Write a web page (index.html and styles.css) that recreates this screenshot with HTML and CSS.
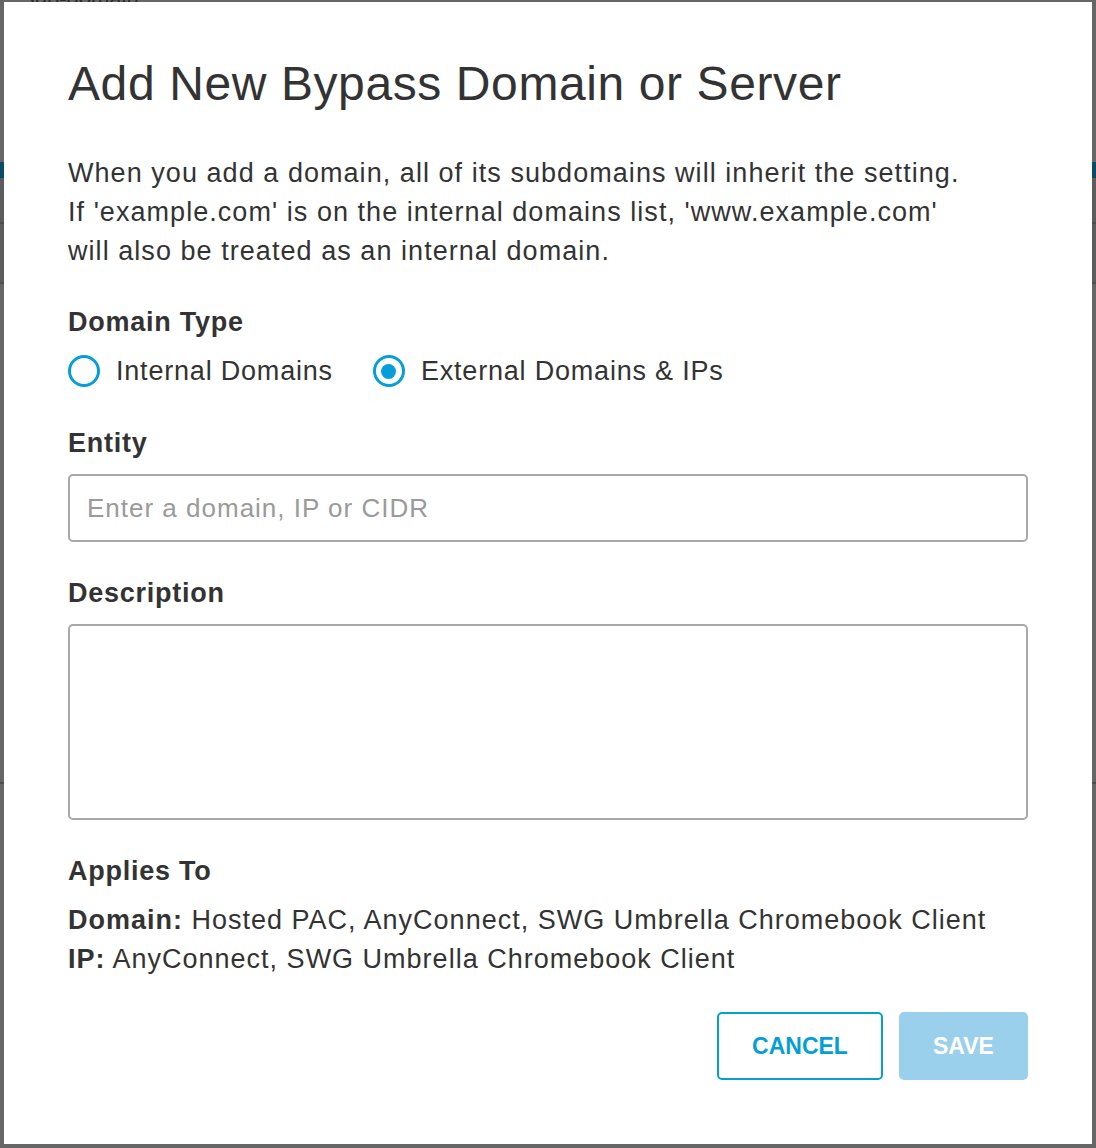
FILE: index.html
```html
<!DOCTYPE html>
<html>
<head>
<meta charset="utf-8">
<link rel="stylesheet" href="styles.css">
</head>
<body>
<div class="backdrop">
  <div class="bg-text">Sub-domain</div>
  <div class="bg-stripe"></div>
  <div class="bg-band"></div>
  <div class="bg-line l1"></div>
  <div class="bg-line l2"></div>
  <div class="bg-line l3"></div>
</div>
<div class="modal">
  <h1 class="title">Add New Bypass Domain or Server</h1>
  <p class="intro">When you add a domain, all of its subdomains will inherit the setting.<br>If 'example.com' is on the internal domains list, 'www.example.com'<br>will also be treated as an internal domain.</p>

  <div class="label label-type">Domain Type</div>
  <div class="radios">
    <label class="radio"><span class="circle"></span><span class="radio-text">Internal Domains</span></label>
    <label class="radio"><span class="circle checked"></span><span class="radio-text">External Domains &amp; IPs</span></label>
  </div>

  <div class="label label-entity">Entity</div>
  <div class="input"><span class="placeholder">Enter a domain, IP or CIDR</span></div>

  <div class="label label-desc">Description</div>
  <div class="textarea"></div>

  <div class="label label-applies">Applies To</div>
  <div class="applies">
    <div><b>Domain:</b> Hosted PAC, AnyConnect, SWG Umbrella Chromebook Client</div>
    <div><b>IP:</b> AnyConnect, SWG Umbrella Chromebook Client</div>
  </div>

  <div class="actions">
    <div class="btn btn-cancel">CANCEL</div>
    <div class="btn btn-save">SAVE</div>
  </div>
</div>
</body>
</html>
```

FILE: styles.css
```css
html, body {
  margin: 0;
  padding: 0;
}
body {
  background: #666666;
  width: 1096px;
  height: 1148px;
  overflow: hidden;
  position: relative;
  font-family: "Liberation Sans", Arial, sans-serif;
  color: #333333;
  padding: 2px 4px 4px 4px;
  box-sizing: border-box;
}
.backdrop {
  position: absolute;
  inset: 0;
  z-index: 0;
}
.bg-text {
  position: absolute;
  left: 20px;
  top: -14px;
  font-size: 22px;
  color: #2a2a2a;
}
.bg-stripe {
  position: absolute;
  left: 0;
  right: 0;
  top: 162px;
  height: 16px;
  background: #0b4a68;
}
.bg-band {
  position: absolute;
  left: 0;
  right: 0;
  top: 178px;
  height: 104px;
  background: #5c5c5c;
}
.bg-line {
  position: absolute;
  left: 0;
  right: 0;
  height: 2px;
  background: #4e4e4e;
}
.l1 { top: 222px; }
.l2 { top: 282px; }
.l3 { top: 782px; }

.modal {
  position: relative;
  z-index: 1;
  background: #ffffff;
  width: 1088px;
  height: 1142px;
  box-sizing: border-box;
  padding: 53px 64px 64px 64px;
  display: flex;
  flex-direction: column;
}
.title {
  margin: 0;
  font-size: 48px;
  line-height: 58px;
  font-weight: normal;
  letter-spacing: 0.6px;
  color: #333333;
}
.intro {
  margin: 41px 0 0 0;
  font-size: 27px;
  line-height: 39px;
  letter-spacing: 1.05px;
}
.label {
  font-size: 27px;
  line-height: 36px;
  font-weight: bold;
  letter-spacing: 0.75px;
}
.label-type { margin-top: 33px; }
.radios {
  margin-top: 13px;
  display: flex;
  gap: 40px;
  height: 36px;
  align-items: center;
}
.radio {
  display: flex;
  align-items: center;
  gap: 16px;
  font-size: 27px;
  letter-spacing: 0.8px;
}
.circle {
  width: 32px;
  height: 32px;
  box-sizing: border-box;
  border: 3.5px solid #049fd9;
  border-radius: 50%;
  display: flex;
  align-items: center;
  justify-content: center;
}
.circle.checked::after {
  content: "";
  width: 15px;
  height: 15px;
  border-radius: 50%;
  background: #049fd9;
}
.label-entity { margin-top: 36px; }
.input {
  margin-top: 13px;
  height: 68px;
  box-sizing: border-box;
  border: 2px solid #a8a8a8;
  border-radius: 5px;
  display: flex;
  align-items: center;
  padding-left: 17px;
}
.placeholder {
  font-size: 26px;
  color: #9a9a9a;
  letter-spacing: 1px;
}
.label-desc { margin-top: 33px; }
.textarea {
  margin-top: 13px;
  height: 196px;
  box-sizing: border-box;
  border: 2px solid #a8a8a8;
  border-radius: 5px;
}
.label-applies { margin-top: 33px; }
.applies {
  margin-top: 12px;
  font-size: 27px;
  line-height: 39px;
  letter-spacing: 1px;
}
.applies b {
  font-weight: bold;
}
.actions {
  margin-top: 33px;
  display: flex;
  justify-content: flex-end;
  gap: 16px;
}
.btn {
  height: 68px;
  box-sizing: border-box;
  border-radius: 5px;
  display: flex;
  align-items: center;
  justify-content: center;
  font-size: 23px;
  font-weight: bold;
}
.btn-cancel {
  width: 166px;
  border: 2px solid #049fd9;
  color: #049fd9;
  background: #ffffff;
}
.btn-save {
  width: 129px;
  background: #9bd0ec;
  color: #ffffff;
}
```
